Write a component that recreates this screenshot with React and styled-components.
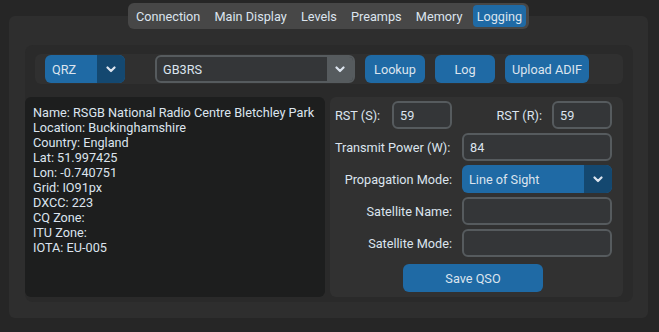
import React from "react";
import styled, { createGlobalStyle } from "styled-components";

const Global = createGlobalStyle`
  html, body { margin: 0; padding: 0; background: #262626; }
  body { font-family: Roboto, "Noto Sans", sans-serif; font-size: 12.7px; color: #dce4ee; }
  * { box-sizing: border-box; }
`;

const Root = styled.div`
  width: 659px;
  height: 332px;
  background: #262626;
  padding: 3px 11px 14px 9px;
  display: flex;
  flex-direction: column;
`;

const TabBar = styled.div`
  align-self: flex-start;
  margin-left: 119px;
  margin-bottom: -13px;
  position: relative;
  z-index: 1;
  height: 26px;
  padding: 2px 3px 2px 4px;
  background: #474747;
  border-radius: 6px;
  display: flex;
  gap: 6.2px;
`;

const Tab = styled.div`
  height: 22px;
  padding: 0 4px;
  display: flex;
  align-items: center;
  border-radius: 4px;
  background: ${(p) => (p.$active ? "#1f6aa5" : "transparent")};
  color: #dce4ee;
  white-space: nowrap;
`;

const TabFrame = styled.div`
  flex: 1;
  background: #2e2e2e;
  border-radius: 6px;
  padding: 29px 15px 16px 16px;
  display: flex;
`;

const Inner = styled.div`
  flex: 1;
  background: #2a2a2a;
  border-radius: 8px;
  padding: 9px 10px 5px 0;
  display: flex;
  flex-direction: column;
`;

const Toolbar = styled.div`
  margin-left: 10px;
  height: 30px;
  background: #303030;
  border-radius: 6px;
  padding: 0 10px;
  display: flex;
  align-items: center;
  gap: 10px;
`;

const OptionMenu = styled.div`
  width: ${(p) => (p.$w ? `${p.$w}px` : "auto")};
  height: 28px;
  border-radius: 6px;
  background: #1f6aa5;
  display: flex;
  overflow: hidden;
  margin-right: ${(p) => p.$mr || 0}px;
`;

const OptionText = styled.div`
  flex: 1;
  padding-left: 7px;
  display: flex;
  align-items: center;
  white-space: nowrap;
`;

const OptionArrow = styled.div`
  width: 28px;
  background: #144870;
  display: flex;
  align-items: center;
  justify-content: center;
`;

const Combo = styled.div`
  width: ${(p) => p.$w}px;
  height: 28px;
  border-radius: 6px;
  border: 2px solid #565b5e;
  background: #343638;
  display: flex;
  overflow: hidden;
`;

const ComboText = styled.div`
  flex: 1;
  padding-left: 6px;
  display: flex;
  align-items: center;
`;

const ComboArrow = styled.div`
  width: 26px;
  background: #565b5e;
  display: flex;
  align-items: center;
  justify-content: center;
`;

const Button = styled.div`
  width: ${(p) => p.$w}px;
  height: 28px;
  border-radius: 6px;
  background: #1f6aa5;
  display: flex;
  align-items: center;
  justify-content: center;
  white-space: nowrap;
`;

const Body = styled.div`
  margin-top: 13px;
  height: 200px;
  display: flex;
  gap: 5px;
`;

const TextBox = styled.div`
  width: 300px;
  background: #1d1e1e;
  border-radius: 6px;
  padding: 8px 8px;
  line-height: 15px;
`;

const Line = styled.div`
  white-space: nowrap;
`;

const Form = styled.div`
  flex: 1;
  background: #313131;
  border-radius: 6px;
  padding: 4px 11px 0 5px;
  display: flex;
  flex-direction: column;
  gap: 4px;
`;

const RstRow = styled.div`
  display: grid;
  grid-template-columns: 57px 60px 1fr 60px;
  align-items: center;
  height: 28px;
`;

const FieldRow = styled.div`
  display: grid;
  grid-template-columns: 117px 1fr;
  column-gap: 10px;
  align-items: center;
  height: 28px;
`;

const Label = styled.div`
  white-space: nowrap;
  justify-self: ${(p) => (p.$right ? "end" : "start")};
  padding-right: ${(p) => p.$pr || 0}px;
`;

const Entry = styled.div`
  height: 28px;
  border-radius: 6px;
  border: 2px solid #565b5e;
  background: #343638;
  padding-left: 6px;
  display: flex;
  align-items: center;
`;

const SaveButton = styled(Button)`
  margin: 3px 0 0 68px;
`;

const Chevron = () => (
  <svg width="10" height="7" viewBox="0 0 10 7">
    <polyline points="1.5,1.5 5,5 8.5,1.5" fill="none" stroke="#dce4ee" strokeWidth="2.2" strokeLinecap="round" strokeLinejoin="round" />
  </svg>
);

const tabs = ["Connection", "Main Display", "Levels", "Preamps", "Memory", "Logging"];
const info = [
  "Name: RSGB National Radio Centre Bletchley Park",
  "Location: Buckinghamshire",
  "Country: England",
  "Lat: 51.997425",
  "Lon: -0.740751",
  "Grid: IO91px",
  "DXCC: 223",
  "CQ Zone:",
  "ITU Zone:",
  "IOTA: EU-005",
];

export default function App() {
  return (
    <>
      <Global />
      <Root>
        <TabBar>
          {tabs.map((t) => (
            <Tab key={t} $active={t === "Logging"}>{t}</Tab>
          ))}
        </TabBar>
        <TabFrame>
          <Inner>
            <Toolbar>
              <OptionMenu $w={80} $mr={20}>
                <OptionText>QRZ</OptionText>
                <OptionArrow><Chevron /></OptionArrow>
              </OptionMenu>
              <Combo $w={200}>
                <ComboText>GB3RS</ComboText>
                <ComboArrow><Chevron /></ComboArrow>
              </Combo>
              <Button $w={60}>Lookup</Button>
              <Button $w={60}>Log</Button>
              <Button $w={84}>Upload ADIF</Button>
            </Toolbar>
            <Body>
              <TextBox>
                {info.map((l) => (
                  <Line key={l}>{l}</Line>
                ))}
              </TextBox>
              <Form>
                <RstRow>
                  <Label>RST (S):</Label>
                  <Entry>59</Entry>
                  <Label $right $pr={10}>RST (R):</Label>
                  <Entry>59</Entry>
                </RstRow>
                <FieldRow>
                  <Label>Transmit Power (W):</Label>
                  <Entry>84</Entry>
                </FieldRow>
                <FieldRow>
                  <Label $right>Propagation Mode:</Label>
                  <OptionMenu>
                    <OptionText>Line of Sight</OptionText>
                    <OptionArrow><Chevron /></OptionArrow>
                  </OptionMenu>
                </FieldRow>
                <FieldRow>
                  <Label $right>Satellite Name:</Label>
                  <Entry />
                </FieldRow>
                <FieldRow>
                  <Label $right>Satellite Mode:</Label>
                  <Entry />
                </FieldRow>
                <SaveButton $w={140}>Save QSO</SaveButton>
              </Form>
            </Body>
          </Inner>
        </TabFrame>
      </Root>
    </>
  );
}
